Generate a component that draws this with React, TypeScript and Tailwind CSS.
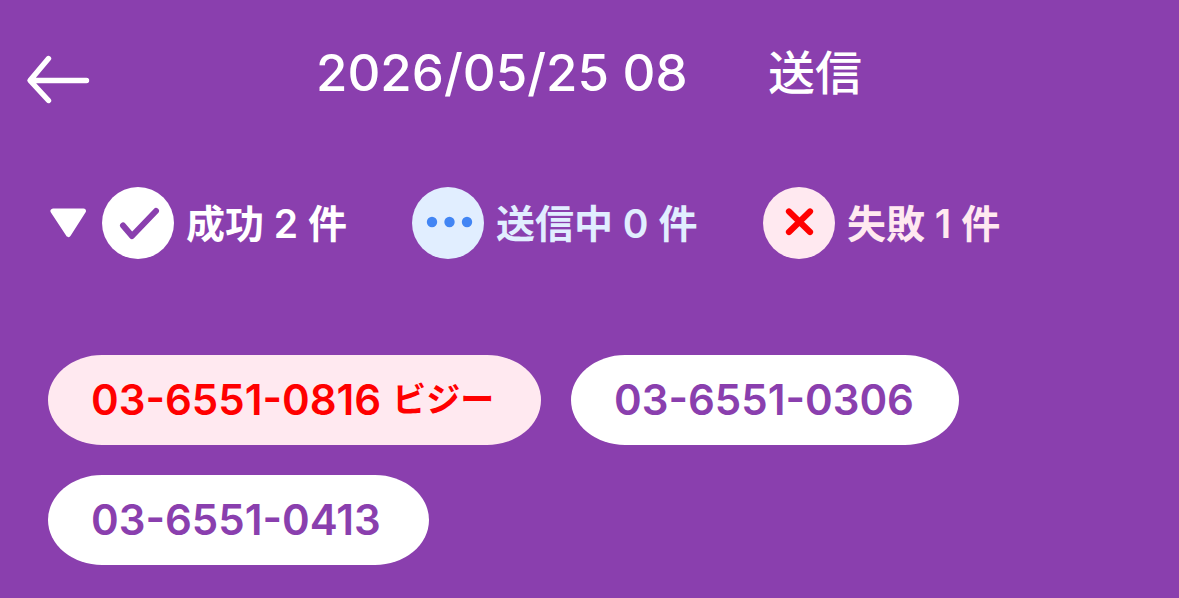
import React from 'react'
import clsx from 'clsx'

interface RecipientType {
    id: number,
    phone: string,
    failed?: boolean,
    reason?: string,
    width: string
}

const recipients: RecipientType[] = [
    { id: 1, phone: '03-6551-0816', failed: true, reason: 'ビジー', width: 'w-[493px]' },
    { id: 2, phone: '03-6551-0306', width: 'w-[388px]' },
    { id: 3, phone: '03-6551-0413', width: 'w-[381px]' },
]

const Header = () => (
    <header className="flex h-[150px] items-start text-white">
        <button className="mt-[54px] ml-[24px]" aria-label="戻る">
            <svg width="68" height="52" viewBox="0 0 68 52" fill="none" stroke="currentColor" strokeWidth="5.4" strokeLinecap="round" strokeLinejoin="round">
                <path d="M24.5 4.5 6 26.5l18.5 20M8 26.5h54.5" />
            </svg>
        </button>
        <h1 className="ml-[224px] mt-[43px] flex h-[60px] items-center whitespace-nowrap text-[51px] leading-[60px] font-medium">
            <span className="w-[372px] overflow-hidden">2026/05/25 08:</span>
            <span className="ml-[80px] text-[47px]">送信</span>
        </h1>
    </header>
)

const Summary = () => (
    <section className="flex h-[146px] items-center pb-0 pl-[48px] text-[39px] leading-none font-semibold whitespace-nowrap">
        <svg className="text-white" width="40" height="34" viewBox="0 0 40 34" fill="currentColor" stroke="currentColor" strokeWidth="5" strokeLinejoin="round">
            <path d="M5 5h30.500L20.500 28.500Z" />
        </svg>
        <div className="ml-[14px] flex w-[310px] items-center text-white">
            <svg width="72" height="72" viewBox="0 0 72 72" fill="none">
                <circle cx="36" cy="36" r="36" fill="currentColor" />
                <path d="M21 38.500 30 49 54 24" stroke="#8a3fae" strokeWidth="6" strokeLinecap="round" strokeLinejoin="round" />
            </svg>
            <span className="ml-[12px]">成功 2 件</span>
        </div>
        <div className="flex w-[351px] items-center text-[#e1eeff]">
            <svg width="72" height="72" viewBox="0 0 72 72">
                <circle cx="36" cy="36" r="36" fill="currentColor" />
                <g fill="#4285f4">
                    <circle cx="20" cy="35" r="5.200" />
                    <circle cx="37.500" cy="35" r="5.200" />
                    <circle cx="55" cy="35" r="5.200" />
                </g>
            </svg>
            <span className="ml-[12px]">送信中 0 件</span>
        </div>
        <div className="flex items-center text-[#ffe9f0]">
            <svg width="72" height="72" viewBox="0 0 72 72" fill="none">
                <circle cx="36" cy="36" r="36" fill="currentColor" />
                <path d="m26 24.500 21 20.500M47 24.500 26 45" stroke="#ff0000" strokeWidth="6.200" strokeLinecap="round" />
            </svg>
            <span className="ml-[12px]">失敗 1 件</span>
        </div>
    </section>
)

const App = () => {
    return (
        <main className="h-[598px] w-[1179px] overflow-hidden bg-[#8a3fae] font-['Inter','Noto_Sans_CJK_JP',sans-serif]">
            <Header />
            <Summary />
            <ul className="mt-[59px] flex flex-wrap gap-[30px] px-[48px]">
                {recipients.map((recipient) => (
                    <li
                        key={recipient.id}
                        className={clsx(
                            'flex h-[90px] items-center rounded-[54px/45px] pl-[43px] text-[42px] leading-none font-semibold whitespace-nowrap',
                            recipient.width,
                            recipient.failed ? 'bg-[#ffe9f0] text-[#ff0000]' : 'bg-white text-[#8a3fae]'
                        )}
                    >
                        {recipient.phone}
                        {recipient.reason && <span className="ml-[11px] text-[34px]">{recipient.reason}</span>}
                    </li>
                ))}
            </ul>
        </main>
    )
}

export default App
